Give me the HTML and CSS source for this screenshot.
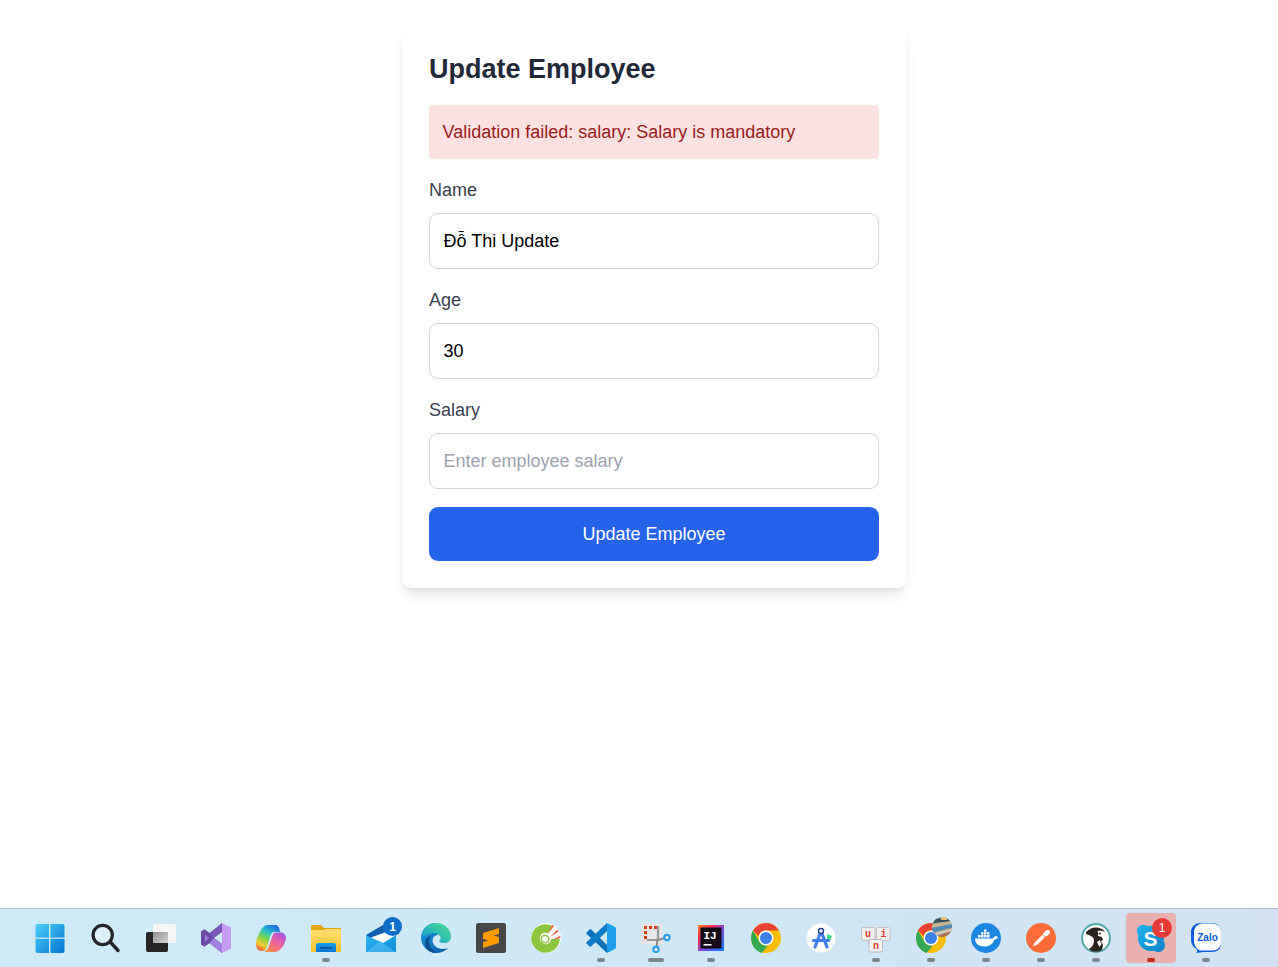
FILE: index.html
```html
<!DOCTYPE html>
<html lang="vi">
<head>
<meta charset="utf-8">
<title>Update Employee</title>
<link rel="stylesheet" href="styles.css">
</head>
<body>
<main class="page">
  <form class="card">
    <h2 class="title">Update Employee</h2>
    <div class="alert">Validation failed: salary: Salary is mandatory</div>
    <div class="field">
      <label class="label" for="name">Name</label>
      <input class="input" id="name" type="text" value="Đỗ Thi Update">
    </div>
    <div class="field">
      <label class="label" for="age">Age</label>
      <input class="input" id="age" type="text" value="30">
    </div>
    <div class="field">
      <label class="label" for="salary">Salary</label>
      <input class="input" id="salary" type="text" placeholder="Enter employee salary">
    </div>
    <button class="submit" type="button">Update Employee</button>
  </form>
</main>
<footer class="taskbar">
  <div class="slot">
    <svg class="ico" viewBox="0 0 30 30"><defs><linearGradient id="win" x1="0" y1="0" x2="1" y2="1"><stop offset="0" stop-color="#4fd0fb"/><stop offset="1" stop-color="#0073d1"/></linearGradient></defs><path fill="url(#win)" d="M.5 3q0-2 2-2h11.500v13.400H.5zM15.400 1H27.500q2 0 2 2v11.400H15.400zM.5 15.800H14V30H2.500q-2 0-2-2zM15.400 15.800H29.500V28q0 2-2 2H15.400z"/></svg>
  </div>
  <div class="slot slot-search">
    <svg class="ico" viewBox="0 0 30 30"><circle cx="11.700" cy="12" r="9.600" fill="#e3f3fa" fill-opacity=".7" stroke="#232528" stroke-width="3.200"/><path d="M19.800 19.500L27 27.500" stroke="#232528" stroke-width="3.400" stroke-linecap="round"/></svg>
  </div>
  <div class="slot">
    <svg class="ico" viewBox="0 0 30 30"><defs><linearGradient id="tv" x1="0" y1="0" x2="1" y2="1"><stop offset="0" stop-color="#8e8e8e"/><stop offset="1" stop-color="#d6d6d6"/></linearGradient></defs><rect x="0" y="9" width="22" height="20" rx="2" fill="#262626"/><rect x="7" y="1" width="23" height="19" rx="2" fill="#f6f6f6"/><rect x="7" y="9" width="15" height="11" fill="url(#tv)"/></svg>
  </div>
  <div class="slot">
    <svg class="ico" viewBox="0 0 30 30"><path fill="#c79bf4" d="M21 0l9 4.500v21L21 30z"/><path fill="#7a58b8" d="M21 0L8.500 10 3.500 6.500 0 8.500v13l3.500 2 5-3.500L21 30v-9l-8-6 8-6z"/><path fill="#6a4aa8" d="M0 8.500l3.500-2 5 3.500L13 15l-4.500 5-5 3.500-3.500-2z"/><path fill="#9a7ad3" d="M4 11l4 4-4 4z"/><path fill="#a27ee0" d="M8.500 20L13 15l8 6v9z"/></svg>
  </div>
  <div class="slot">
    <svg class="ico" viewBox="0 0 30 30"><defs><linearGradient id="cpA" x1=".7" y1="0" x2=".2" y2="1"><stop offset="0" stop-color="#1a6fe6"/><stop offset=".3" stop-color="#2fc4c8"/><stop offset=".55" stop-color="#7fd24a"/><stop offset=".8" stop-color="#f7cf2e"/><stop offset="1" stop-color="#f2553a"/></linearGradient><linearGradient id="cpB" x1=".9" y1="0" x2=".2" y2="1"><stop offset="0" stop-color="#9a52e8"/><stop offset=".5" stop-color="#ee62a2"/><stop offset="1" stop-color="#f98a3c"/></linearGradient></defs><path fill="url(#cpA)" d="M13 2h7c2 0 4 4 4 7l-6 0c-2 0-3 2-4 5L11 24c-1 3-3 4-5 4-4 0-6-3-6-7C0 17 3 10 5 7c2-4 5-5 8-5z"/><path fill="url(#cpB)" d="M24 9.500c4 0 6 2.500 6 5.500-1 6-4 11-8 13-2 1-4 1-6 1H8c3-1 4-4 5-6l3-9c1-3 2-4.500 4-4.500z"/></svg>
  </div>
  <div class="slot">
    <svg class="ico" viewBox="0 0 30 30"><defs><linearGradient id="fd" x1="0" y1="0" x2="0" y2="1"><stop offset="0" stop-color="#ffdf72"/><stop offset="1" stop-color="#fcc22e"/></linearGradient><linearGradient id="fb" x1="0" y1="0" x2="0" y2="1"><stop offset="0" stop-color="#1aa0ec"/><stop offset="1" stop-color="#0b76d0"/></linearGradient></defs><path fill="#e5a50a" d="M0 4q0-2 2-2h8l3 3h17v5H0z"/><path fill="url(#fd)" d="M0 7h13l3-1h13q1 0 1 1v22H0z"/><path fill="url(#fb)" d="M5 22q0-2 2-2h16q2 0 2 2v7H5z"/><rect x="9" y="24" width="12" height="1.600" fill="#0a4f96"/></svg>
    <span class="dot"></span>
  </div>
  <div class="slot">
    <svg class="ico" viewBox="0 0 30 30"><defs><linearGradient id="ml" x1="0" y1="0" x2="1" y2="1"><stop offset="0" stop-color="#31b8f2"/><stop offset="1" stop-color="#0d88da"/></linearGradient></defs><path fill="url(#ml)" d="M0 12h30v17H0z"/><path fill="#0d5fae" d="M0 12L17 2l6 7L6 15z"/><path fill="#fff" d="M5 14.500L23 8l7 4-13 8z"/><path fill="#57c6f5" fill-opacity=".55" d="M0 29l14-11 3 2 13 9z"/></svg>
    <span class="badge badge-mail">1</span>
  </div>
  <div class="slot">
    <svg class="ico" viewBox="0 0 30 30"><defs><linearGradient id="edA" x1="0" y1="0" x2="1" y2="1"><stop offset="0" stop-color="#1d9be0"/><stop offset="1" stop-color="#0a5aa8"/></linearGradient><linearGradient id="edB" x1="0" y1="1" x2="1" y2="0"><stop offset="0" stop-color="#1399d8"/><stop offset=".6" stop-color="#33c6a8"/><stop offset="1" stop-color="#52d68a"/></linearGradient></defs><path fill="url(#edA)" d="M15 0C6 0 0 7 0 15c0 8 7 15 15 15 5 0 9-2 12-5-5 2-11 1-14-3-2-3-2-7 1-9l6-3z"/><path fill="#0c4a8e" d="M10 13c-3 3-3 9 1 13 1 1 3 3 5 4-6 0-11-3-12-9 0-4 2-7 6-8z"/><path fill="url(#edB)" d="M1 11C3 4 9 0 15 0c8 0 15 6 15 14 0 4-3 6-7 6-3 0-5-1-5-2 2-1 2-3 1-5-2-3-7-4-11-2-3 1-5 3-7 0z"/></svg>
  </div>
  <div class="slot">
    <svg class="ico" viewBox="0 0 30 30"><rect width="30" height="30" rx="2" fill="#474747"/><path fill="#ff9a00" d="M23 5v6L7 16v-6zM7 19l16-5v6L7 25zM7 10l16 4v6L7 16z"/></svg>
  </div>
  <div class="slot">
    <svg class="ico" viewBox="0 0 30 30"><circle cx="15" cy="15" r="15" fill="#fff"/><path fill="none" stroke="#8cc63f" stroke-width="8.500" d="M19 6.500A10 10 0 1 0 24.500 16"/><circle cx="14" cy="16" r="3.800" fill="#fff" stroke="#8cc63f" stroke-width="1.500"/><path fill="#e8502e" d="M19 14l7-7 1.500 1.500zM17 11l4-9 2 .8zM21 17l8-4 .5 2z"/></svg>
  </div>
  <div class="slot">
    <svg class="ico" viewBox="0 0 30 30"><path fill="#1fa0ef" d="M21 0l8 4q1 .5 1 2v18q0 1.500-1 2l-8 4z"/><path fill="#0b6fba" d="M3.500 6.500L5 6.300 21 22v8L.5 10.800Q0 10 .5 9.500z"/><path fill="#0d7bc8" d="M21 0v8L5 23.500 3.500 23.500.5 20.500q-.5-.6 0-1.200z"/></svg>
    <span class="dot"></span>
  </div>
  <div class="slot">
    <svg class="ico" viewBox="0 0 30 30"><rect x="0" y="0" width="21.500" height="21.500" rx="2.500" fill="#e6e6e6"/><path d="M3 3h3v3H3zM8 3h3v3H8zM13 3h3v3h-3zM3 8h3v3H3zM3 13h3v3H3z" fill="#d63c12"/><path d="M17 3v14H6" fill="none" stroke="#9c9c9c" stroke-width="2.200"/><path d="M15 17.500l9-2.500M16.500 16l-1 9" stroke="#8a8a8a" stroke-width="2"/><circle cx="26" cy="14.500" r="2.600" fill="#fff" stroke="#2a9fe8" stroke-width="2.200"/><circle cx="15" cy="26.500" r="2.600" fill="#fff" stroke="#2a9fe8" stroke-width="2.200"/></svg>
    <span class="dot dot-wide"></span>
  </div>
  <div class="slot">
    <svg class="ico" viewBox="0 0 30 30"><defs><linearGradient id="ijg" x1="0" y1="0" x2="1" y2="1"><stop offset="0" stop-color="#fc801d"/><stop offset=".3" stop-color="#fe2857"/><stop offset=".55" stop-color="#7a4be0"/><stop offset="1" stop-color="#087cfa"/></linearGradient></defs><rect x="2" y="2" width="26" height="26" fill="url(#ijg)"/><rect x="4.500" y="4.500" width="21" height="21" fill="#120a16"/><text class="ij" x="7.500" y="15.500">IJ</text><rect x="7.500" y="21" width="8" height="1.600" fill="#fff"/></svg>
    <span class="dot"></span>
  </div>
  <div class="slot">
    <svg class="ico" viewBox="0 0 30 30"><use href="#chromeIcon"/></svg>
  </div>
  <div class="slot">
    <svg class="ico" viewBox="0 0 30 30"><circle cx="15" cy="15" r="14.500" fill="#fff"/><path fill="#3ddc84" d="M21 11l5 2-2 5-3-1z"/><path d="M15 8L9 24M15 8l6 16M7.500 17.500h15" fill="none" stroke="#3f7ff0" stroke-width="3.200" stroke-linecap="round"/><circle cx="15" cy="8" r="2.500" fill="#fff" stroke="#1d3f80" stroke-width="1.400"/></svg>
  </div>
  <div class="slot">
    <svg class="ico" viewBox="0 0 30 30"><rect x=".5" y="4.500" width="13.500" height="13" rx="1.500" fill="#efefef" stroke="#c4c4c4"/><rect x="15.500" y="4.500" width="13.500" height="13" rx="1.500" fill="#efefef" stroke="#c4c4c4"/><rect x="8" y="16.500" width="13.500" height="12.500" rx="1.500" fill="#f3f3f3" stroke="#b8b8b8"/><text class="key" x="7" y="14">u</text><text class="key" x="22.500" y="14">i</text><text class="key" x="15" y="26">n</text></svg>
    <span class="dot"></span>
  </div>
  <div class="slot">
    <svg class="ico" viewBox="0 0 30 30"><use href="#chromeIcon"/></svg>
    <svg class="avatar" viewBox="0 0 20 20"><defs><clipPath id="avc"><circle cx="10" cy="10" r="10"/></clipPath></defs><g clip-path="url(#avc)"><rect width="20" height="20" fill="#7d8d96"/><path d="M0 2l20-1v3L0 6z" fill="#39505c"/><path d="M0 7l20-3v3L0 11z" fill="#c8b68e"/><path d="M0 11l20-4v3L0 15z" fill="#4d8ebc"/><path d="M2 16l18-5v3L2 19z" fill="#d6c9b0"/><path d="M6 19l14-5v6H6z" fill="#b56a4a"/><path d="M9 0h6v3H9z" fill="#e5c46a"/></g></svg>
    <span class="dot"></span>
  </div>
  <div class="slot">
    <svg class="ico" viewBox="0 0 30 30"><circle cx="15" cy="15" r="15" fill="#1d85e2"/><path fill="#fff" d="M4 15.500h17c1 0 2-1 2.500-2 1.500-.5 3 0 3.500 1-.8 1.500-2.500 2-3.500 2-1.500 4.500-5.500 7-10 7-6 0-9.500-3-9.500-8z"/><path fill="#fff" d="M7 12h2.500v2.500H7zM10 12h2.500v2.500H10zM13 12h2.500v2.500H13zM16 12h2.500v2.500H16zM10 9.200h2.500v2.300H10zM13 9.200h2.500v2.300H13zM16 9.200h2.500v2.300H16zM13 6.400h2.500v2.300H13z"/></svg>
    <span class="dot"></span>
  </div>
  <div class="slot">
    <svg class="ico" viewBox="0 0 30 30"><circle cx="15" cy="15" r="15" fill="#ff6c37"/><path fill="#fff" d="M7 23.500l1-3L17 11c1-2 3-4 5-4 1.500 0 2.500 1 2 2.500-.5 2-2.500 3.500-4.500 4L11 22l-2 .5z"/><path d="M17 12l3 3" stroke="#ff6c37" stroke-width=".8"/></svg>
    <span class="dot"></span>
  </div>
  <div class="slot">
    <svg class="ico" viewBox="0 0 30 30"><circle cx="15" cy="15" r="14" fill="#fff" stroke="#4fa8a8" stroke-width="2"/><path fill="#2a2320" d="M5 9c3-3 7-5 11-4.500 3 .3 6 1.500 8 4.500-2-.8-5-1.500-7.500-1 1 1.500 1 3 .5 5l4 1 1 3-2 1 2 4-1 5-3 1.500h-7l-3-2.500 2.500-2c2.500-2.500 3-6 2-9-2-2-4-3-7.500-4z"/><circle cx="19" cy="10.500" r="1" fill="#2a2320"/><path fill="#fff" d="M16 19l3-2 1.500 4-2 3z"/></svg>
    <span class="dot"></span>
  </div>
  <div class="slot slot-active">
    <svg class="ico" viewBox="0 0 30 30"><defs><linearGradient id="sk" x1="0" y1="0" x2="1" y2="1"><stop offset="0" stop-color="#22b4ee"/><stop offset="1" stop-color="#0a7fc8"/></linearGradient></defs><path fill="url(#sk)" d="M7 2c2 0 3.500.5 5 1 1-.2 2-.3 3-.3C22 2.700 28 8 28 15c0 1-.1 2-.3 3 .8 1.500 1.300 3 1.300 4.500 0 3.500-3 6.500-6.500 6.500-1.800 0-3-.4-4.500-1.300-1 .2-2 .3-3 .3C7.500 28 2 22.500 2 15c0-1 .1-2 .3-3C1.500 10.700 1 9.500 1 8c0-3.500 2.500-6 6-6z"/><text class="sk" x="14.500" y="22.500">S</text></svg>
    <span class="badge badge-skype">1</span>
    <span class="dot dot-red"></span>
  </div>
  <div class="slot">
    <svg class="ico" viewBox="0 0 30 30"><path fill="#0b5fe0" d="M9 0h12c5 0 9 4 9 9v12c0 5-4 8-9 8H12c-2 0-4 1-7 1 1-1 1.500-2 1-3.500C2 24 0 21 0 17V9c0-5 4-9 9-9z"/><path fill="#fff" d="M11 .5h10c5 0 9 4 9 8.500v11c0 4-4 7.500-9 7.500H10C6 27.500 3 22 3 18V9c0-4 4-8.500 8-8.500z"/><text class="zalo" x="16.500" y="18">Zalo</text></svg>
    <span class="dot"></span>
  </div>
  <svg class="defs" width="0" height="0"><defs>
    <g id="chromeIcon"><circle cx="15" cy="15" r="15" fill="#fbbc04"/><path fill="#ea4335" d="M2 7.500C5 2.800 9.500 0 15 0c5.500 0 10.500 3 13 7.500H15C11.500 7.500 8.500 9.500 7.500 13z"/><path fill="#34a853" d="M2 7.500L8.500 18.800c1.500 3 5 4.500 8.500 3.600L10.500 30C4.500 28 0 22 0 15c0-2.500.7-5.300 2-7.500z"/><circle cx="15" cy="15" r="7.500" fill="#fff"/><circle cx="15" cy="15" r="6" fill="#3b7fe8"/></g>
  </defs></svg>
</footer>
</body>
</html>
```

FILE: styles.css
```css
* {
  box-sizing: border-box;
}

html,
body {
  height: 100%;
  margin: 0;
}

body {
  display: flex;
  flex-direction: column;
  overflow: hidden;
  background: #fff;
  font-family: "Liberation Sans", Arial, sans-serif;
  font-size: 18px;
  line-height: 27px;
}

.page {
  flex: 1;
  display: flex;
  justify-content: center;
  align-items: flex-start;
  padding: 24px 0 0 30px;
  min-height: 0;
}

.card {
  display: flex;
  flex-direction: column;
  width: 504px;
  padding: 27px;
  background: #fff;
  border-radius: 9px;
  box-shadow: 0 10px 15px -3px rgba(0, 0, 0, .1), 0 4px 6px -2px rgba(0, 0, 0, .05);
}

.title {
  margin: 0 0 18px;
  font-size: 27px;
  line-height: 36px;
  font-weight: 700;
  color: #1f2937;
}

.alert {
  margin-bottom: 18px;
  padding: 13.5px;
  border-radius: 4.5px;
  background: #fee2e2;
  color: #991b1b;
}

.field {
  display: flex;
  flex-direction: column;
  margin-bottom: 18px;
}

.label {
  margin-bottom: 9px;
  color: #374151;
}

.input {
  height: 56px;
  padding: 13.5px;
  border: 1px solid #d1d5db;
  border-radius: 9px;
  background: #fff;
  color: #000;
  font: inherit;
  outline: none;
}

.input::placeholder {
  color: #9ca3af;
  opacity: 1;
}

.submit {
  height: 54px;
  border: 0;
  border-radius: 9px;
  background: #2563eb;
  color: #fff;
  font: inherit;
}

.taskbar {
  flex: none;
  display: flex;
  gap: 5px;
  height: 59px;
  padding: 4px 0 0 24.5px;
  border-top: 1px solid #b2bec6;
  background: linear-gradient(90deg, #cdebf7 0%, #cee8f6 45%, #d2e2f3 100%);
}

.slot {
  position: relative;
  display: flex;
  flex-direction: column;
  align-items: center;
  width: 50px;
  height: 50px;
  padding-top: 10px;
  border-radius: 4px;
}

.slot-search {
  margin-left: 1.5px;
}

.slot-active {
  background: #e8b0ae;
}

.ico {
  flex: none;
  width: 30px;
  height: 30px;
}

.dot {
  flex: none;
  width: 8px;
  height: 4px;
  margin-top: 5px;
  border-radius: 2px;
  background: #7b868e;
}

.dot-wide {
  width: 16px;
}

.dot-red {
  background: #c42b1c;
}

.badge {
  position: absolute;
  display: flex;
  align-items: center;
  justify-content: center;
  border-radius: 50%;
  color: #fff;
  font-size: 12px;
  line-height: 1;
  font-weight: 700;
}

.badge-mail {
  top: 4px;
  left: 27px;
  width: 19px;
  height: 19px;
  background: #0b6ec9;
}

.badge-skype {
  top: 5px;
  left: 26px;
  width: 20px;
  height: 20px;
  background: #e53935;
  font-weight: 400;
}

.avatar {
  position: absolute;
  top: 4px;
  left: 26px;
  width: 20px;
  height: 20px;
}

.defs {
  position: absolute;
}

.ij {
  fill: #fff;
  font-size: 11px;
  font-weight: 700;
  font-family: "Liberation Mono", monospace;
}

.key {
  fill: #d93a3a;
  font-size: 10px;
  font-weight: 700;
  text-anchor: middle;
  font-family: "Liberation Mono", monospace;
}

.sk {
  fill: #fff;
  font-size: 21px;
  font-weight: 700;
  text-anchor: middle;
}

.zalo {
  fill: #0b5fe0;
  font-size: 10px;
  font-weight: 700;
  text-anchor: middle;
}
```
